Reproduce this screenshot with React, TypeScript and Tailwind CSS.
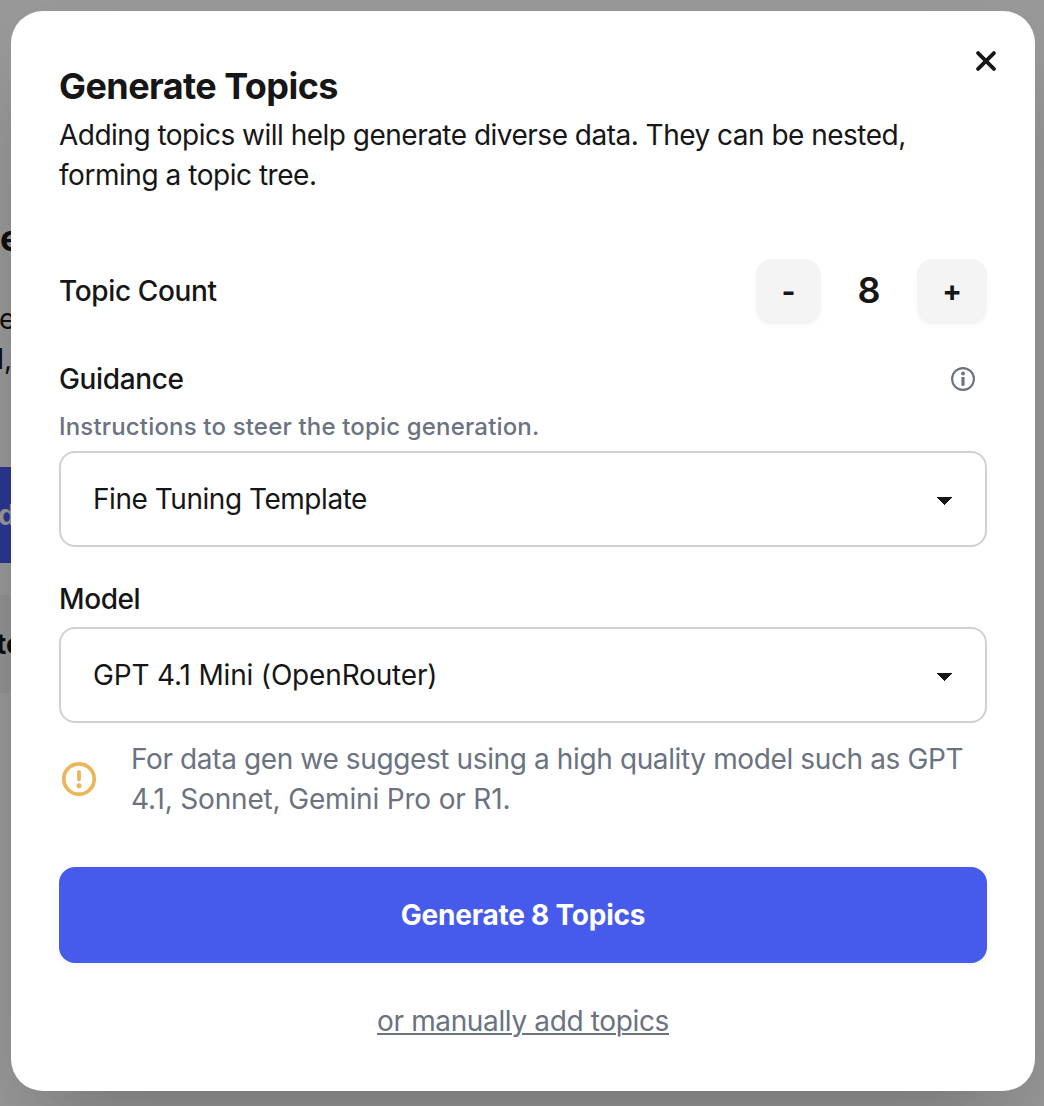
import React from "react";

function SelectField({ children }: { children: React.ReactNode }) {
  return (
    <button className="flex h-24 w-full items-center justify-between rounded-[16px] border-2 border-[#d1d1d1] bg-white pr-[33px] pl-8 text-left text-[28px] leading-10">
      {children}
      <svg width="15" height="8" viewBox="0 0 15 8" className="mt-[3px]" shapeRendering="crispEdges">
        <path d="M0 0H15L7.5 8Z" fill="#161616" />
      </svg>
    </button>
  );
}

function Backdrop() {
  return (
    <div className="absolute inset-0 overflow-hidden bg-[#999999] text-[#0e0e0e]">
      <span className="absolute top-[218px] left-0 text-[36px] leading-10 font-bold">e</span>
      <span className="absolute top-[299px] left-[-1px] text-[28px] leading-10">e</span>
      <span className="absolute top-[339px] right-[1032px] text-[28px] leading-10">l,</span>
      <div className="absolute top-[467px] left-0 flex h-24 w-10 items-center bg-[#2a3792] text-[28px] font-bold text-[#999999]">
        <span className="-ml-[2px]">d</span>
      </div>
      <div className="absolute top-[595px] left-0 flex h-[98px] w-10 items-center bg-[#929292] text-[28px] font-bold">
        <span className="-ml-[4px]">to</span>
      </div>
    </div>
  );
}

export default function App() {
  return (
    <div className="relative h-[1106px] w-[1044px] overflow-hidden font-['Inter',sans-serif] text-[#161616]">
      <Backdrop />
      <div className="relative p-[11px]">
        <section className="relative flex h-[1080px] w-[1024px] flex-col rounded-[32px] bg-white p-12 shadow-[0_50px_100px_-24px_rgba(0,0,0,0.25)]">
          <button aria-label="Close" className="absolute top-[40px] right-[39px]">
            <svg width="20" height="20" viewBox="0 0 20 20" className="block" stroke="#161616" strokeWidth="3.8" strokeLinecap="round">
              <path d="M2.1 2.1L17.9 17.9M17.9 2.1L2.1 17.9" />
            </svg>
          </button>

          <h1 className="-mt-px mb-px text-[36px] leading-[56px] font-bold tracking-[-0.56px]">Generate Topics</h1>
          <p className="text-[28px] leading-10 tracking-[-0.51px]">
            Adding topics will help generate diverse data. They can be nested,
            <br />
            <span className="tracking-[-0.46px]">forming a topic tree.</span>
          </p>

          <div className="mt-16 flex h-16 items-center justify-between">
            <span className="text-[28px] leading-10 font-medium tracking-[-0.36px]">Topic Count</span>
            <div className="flex items-center">
              <button className="h-[65px] w-[65px] rounded-[16px] bg-[#f4f4f4] text-[30px] leading-8 font-bold shadow-[0_2px_4px_rgba(0,0,0,0.03)]">-</button>
              <span className="-mt-[2px] w-24 text-center text-[36px] leading-[56px] font-semibold">8</span>
              <button className="h-[65px] w-[70px] rounded-[16px] bg-[#f4f4f4] text-[29px] leading-8 font-bold shadow-[0_2px_4px_rgba(0,0,0,0.03)]">+</button>
            </div>
          </div>

          <div className="mt-9 flex h-10 items-center justify-between pr-[11px]">
            <span className="text-[28px] leading-10 font-medium tracking-[-0.36px]">Guidance</span>
            <svg width="26" height="26" viewBox="0 0 26 26" fill="none">
              <circle cx="13" cy="13" r="10.9" stroke="#6b7280" strokeWidth="2.1" />
              <circle cx="13" cy="7.5" r="1.9" fill="#6b7280" />
              <path d="M13 11V19.8" stroke="#6b7280" strokeWidth="3.1" />
            </svg>
          </div>
          <p className="mt-3 mb-2 text-[24px] leading-8 font-medium tracking-[0.17px] text-[#6b7280]">Instructions to steer the topic generation.</p>
          <SelectField>
            <span className="tracking-[-0.46px]">Fine Tuning Template</span>
          </SelectField>

          <span className="mt-8 mb-2 text-[28px] leading-10 font-medium tracking-[-0.4px]">Model</span>
          <SelectField>
            <span className="tracking-[-0.17px]">GPT 4.1 Mini (OpenRouter)</span>
          </SelectField>

          <div className="mt-4 flex items-center">
            <svg width="40" height="40" viewBox="0 0 40 40" fill="none" stroke="#ecb658" strokeLinecap="round">
              <circle cx="20" cy="20" r="15.2" strokeWidth="3.7" />
              <path d="M20 13V20.3" strokeWidth="3.8" />
              <circle cx="20" cy="26.8" r="2.5" fill="#ecb658" stroke="none" />
            </svg>
            <p className="ml-8 text-[28px] leading-10 text-[#6b7280]">
              <span className="tracking-[-0.38px]">For data gen we suggest using a high quality model such as GPT</span>
              <br />
              <span className="tracking-[-0.17px]">4.1, Sonnet, Gemini Pro or R1.</span>
            </p>
          </div>

          <button className="mt-12 h-24 rounded-[16px] bg-[#465bec] text-[28px] font-bold tracking-[-0.22px] text-white shadow-[0_4px_8px_rgba(0,0,0,0.04)]">Generate 8 Topics</button>
          <a className="mt-[38px] self-center text-[28px] leading-10 tracking-[-0.36px] text-[#6b7280] underline decoration-2 underline-offset-[2px]">or manually add topics</a>
        </section>
      </div>
    </div>
  );
}
